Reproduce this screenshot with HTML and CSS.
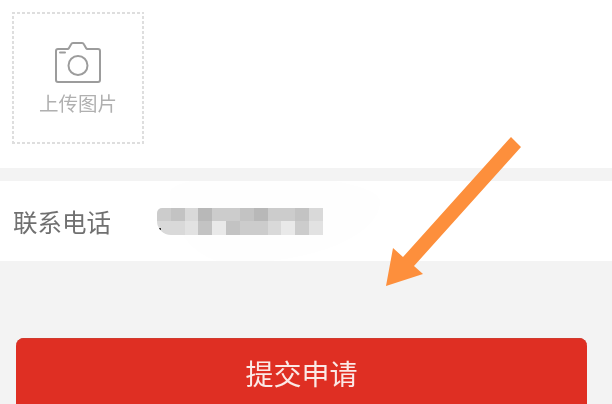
FILE: index.html
```html
<!DOCTYPE html>
<html lang="zh-CN">
<head>
  <meta charset="UTF-8">
  <meta name="viewport" content="width=device-width, initial-scale=1.0">
  <title>提交申请</title>
  <link rel="stylesheet" href="styles.css">
</head>
<body>

  <!-- Upload area -->
  <section class="upload-section">
    <div class="upload-box">
      <svg class="camera-icon" width="46" height="41" viewBox="0 0 46 41" fill="none" stroke="#9c9c9c" stroke-width="2" stroke-linejoin="round" stroke-linecap="round">
        <path d="M3 7h9.500q1 0 1.500-1l2-3.600q.7-1.400 2-1.400h9q1.300 0 2 1.400l2 3.600q.5 1 1.500 1H43q2 0 2 2v29q0 2-2 2H3q-2 0-2-2V9q0-2 2-2z"/>
        <circle cx="23" cy="23.500" r="9.500"/>
        <path d="M5 10.500h5"/>
      </svg>
      <span class="upload-label">上传图片</span>
    </div>
  </section>

  <!-- Phone row -->
  <section class="phone-row">
    <div class="smudge"></div>
    <span class="phone-label">联系电话</span>
    <div class="mosaic">
      <i class="t2"></i><i class="t3"></i><i class="t1"></i><i class="t4"></i><i class="t2"></i><i class="t2"></i><i class="t3"></i><i class="t4"></i><i class="t2"></i><i class="t2"></i><i class="t3"></i><i class="t1"></i>
      <i class="t1"></i><i class="t1"></i><i class="t0"></i><i class="t3"></i><i class="t5"></i><i class="t3"></i><i class="t2"></i><i class="t2"></i><i class="t1"></i><i class="t5"></i><i class="t2"></i><i class="t0"></i>
      <b class="speck"></b>
    </div>
  </section>

  <!-- Submit -->
  <div class="submit-area">
    <button class="submit-btn" type="button"><span class="submit-text">提交申请</span></button>
  </div>

  <!-- Annotation arrow drawn over the page -->
  <svg class="arrow" width="612" height="404" viewBox="0 0 612 404">
    <polygon points="511,137 521,147 414,266 423,274 386,286 393,248 403,257" fill="#fd8f3c"/>
  </svg>

</body>
</html>
```

FILE: styles.css
```css
* {
  box-sizing: border-box;
}

body {
  margin: 0;
  width: 612px;
  height: 404px;
  overflow: hidden;
  position: relative;
  background-color: #f3f3f3;
  font-family: "Noto Sans CJK SC", "Liberation Sans", sans-serif;
}

/* Upload area */
.upload-section {
  height: 168px;
  padding: 12px;
  background-color: #fff;
}

/* Short dashes, a plain dashed border draws them too long at this width */
.upload-box {
  width: 132px;
  height: 132px;
  --dash-x: repeating-linear-gradient(90deg, #dedede 0 3px, transparent 3px 5px);
  --dash-y: repeating-linear-gradient(0deg, #dedede 0 3px, transparent 3px 5px);
  background-image: var(--dash-x), var(--dash-x), var(--dash-y), var(--dash-y);
  background-size: 100% 2px, 100% 2px, 2px 100%, 2px 100%;
  background-position: top, bottom, left, right;
  background-repeat: no-repeat;
  display: flex;
  flex-direction: column;
  align-items: center;
  padding-top: 30px;
}

.camera-icon {
  filter: blur(0.3px);
}

.upload-label {
  margin-top: 6px;
  font-size: 19.500px;
  line-height: 28px;
  color: #b0b0b0;
  filter: blur(0.3px);
}

/* Phone row */
.phone-row {
  height: 80px;
  margin-top: 13px;
  padding-left: 13px;
  background-color: #fff;
  display: flex;
  align-items: center;
  position: relative;
  overflow: hidden;
}

/* Faint retouch mark behind the blurred number */
.smudge {
  position: absolute;
  left: 170px;
  top: -6px;
  width: 210px;
  height: 88px;
  border-radius: 40% 60% 70% 30% / 20% 30% 70% 80%;
  background-color: #fefefe;
}

.phone-label {
  width: 144px;
  font-size: 24.500px;
  color: #707070;
  position: relative;
  filter: blur(0.3px);
}

.mosaic {
  width: 166px;
  height: 27px;
  display: grid;
  grid-template-columns: repeat(12, 1fr);
  grid-template-rows: repeat(2, 1fr);
  position: relative;
  border-radius: 5px 0 0 14px;
  overflow: hidden;
  filter: blur(0.7px);
}

.speck {
  position: absolute;
  left: 2px;
  bottom: 5px;
  width: 2px;
  height: 2px;
  background-color: #333;
}

.t0 { background-color: #e2e2e2; }
.t1 { background-color: #d9d9d9; }
.t2 { background-color: #cccccc; }
.t3 { background-color: #c3c3c3; }
.t4 { background-color: #b8b8b8; }
.t5 { background-color: #e9e9e9; }

/* Submit */
.submit-area {
  padding: 77px 25px 0 16px;
}

.submit-btn {
  display: block;
  width: 571px;
  height: 80px;
  border: 0;
  border-radius: 8px;
  padding: 0 0 10px;
  background-color: #df2f23;
  box-shadow: inset 0 1px #cf3a2e;
  color: #fbe9e6;
  font-family: inherit;
  font-size: 28px;
}

.submit-text {
  filter: blur(0.3px);
}

/* Annotation */
.arrow {
  position: absolute;
  top: 0;
  left: 0;
}
```
